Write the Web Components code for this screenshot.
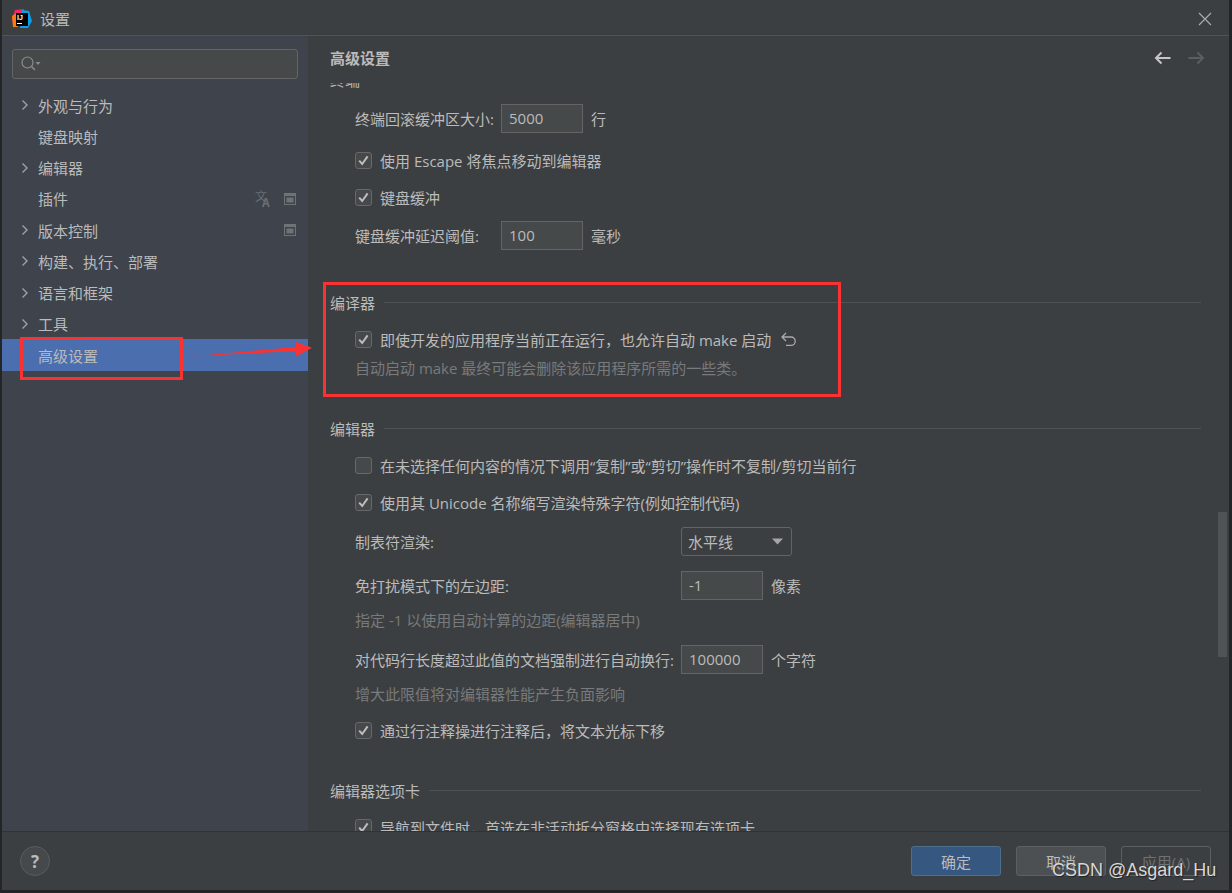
<!DOCTYPE html>
<html lang="zh">
<head>
<meta charset="utf-8">
<title>设置</title>
<style>
	html, body { margin: 0; height: 100%; }
	body {
		background: #232527;
		overflow: hidden;
		font-family: "Open Sans", "Noto Sans CJK SC", sans-serif;
		font-size: 15px;
		color: #bbbbbb;
	}
</style>
</head>
<body>
<settings-window></settings-window>
<script>
// Small controls first, then the panels that use them

class NavItem extends HTMLElement {
	constructor() {
		super();
		const shadow = this.attachShadow({mode: 'open'});
		shadow.innerHTML = `
			<style>
				:host { display: flex; align-items: center; height: 31.25px; padding-left: 17px; padding-right: 12px; }
				:host([selected]) { background: #4b6eaf; }
				.arrow { width: 19px; height: 16px; flex: none; }
				.label { flex: 1; }
				.extra { display: flex; align-items: center; }
			</style>
			<svg class="arrow" viewBox="0 0 19 16"></svg>
			<span class="label"><slot></slot></span>
			<span class="extra"><slot name="extra"></slot></span>`;
	}

	connectedCallback() {
		if (this.hasAttribute('expandable')) {
			this.shadowRoot.querySelector('.arrow').innerHTML =
				'<path d="M3.5 3.5 L8 8 L3.5 12.5" fill="none" stroke="#a0a3a5" stroke-width="1.4"/>';
		}
	}
}
customElements.define('nav-item', NavItem);

class SideNav extends HTMLElement {
	constructor() {
		super();
		const shadow = this.attachShadow({mode: 'open'});
		const win = '<svg slot="extra" width="12" height="12" viewBox="0 0 12 12"><rect x=".5" y=".5" width="11" height="11" fill="none" stroke="#6e7376"/><rect x="1" y="1" width="10" height="2" fill="#6e7376"/><rect x="2.5" y="4.5" width="7" height="5" fill="#6e7376"/></svg>';
		shadow.innerHTML = `
			<style>
				:host { display: block; width: 306px; flex: none; background: #3e434c; box-sizing: border-box; padding-top: 13px; }
				.search { display: flex; align-items: center; box-sizing: border-box; height: 30px; margin: 0 10px 0 10px; padding-left: 7px;
					background: #45494a; border: 1px solid #646464; border-radius: 3px; }
				.nav { margin-top: 10.4px; }
				.tr { font-family: "Noto Sans CJK SC", sans-serif; margin-right: 11px; }
			</style>
			<div class="search">
				<svg width="22" height="18" viewBox="0 0 22 18">
					<circle cx="7.5" cy="7.5" r="5.5" fill="none" stroke="#8a8d8f" stroke-width="1.2"/>
					<path d="M11.5 11.5 L15 15" stroke="#8a8d8f" stroke-width="1.4"/>
					<path d="M15.5 7 h5 l-2.5 3 z" fill="#8a8d8f"/>
				</svg>
			</div>
			<div class="nav">
				<nav-item expandable>外观与行为</nav-item>
				<nav-item>键盘映射</nav-item>
				<nav-item expandable>编辑器</nav-item>
				<nav-item>插件
					<svg slot="extra" class="tr" width="18" height="18" viewBox="0 0 18 18" style="font-family:'Noto Sans CJK SC',sans-serif;margin-right:11px">
						<text x="0" y="11" font-size="12" fill="#6a6f72">文</text>
						<text x="7" y="17" font-size="12" font-weight="700" fill="#6a6f72">A</text>
					</svg>${win}</nav-item>
				<nav-item expandable>版本控制${win}</nav-item>
				<nav-item expandable>构建、执行、部署</nav-item>
				<nav-item expandable>语言和框架</nav-item>
				<nav-item expandable>工具</nav-item>
				<nav-item selected>高级设置</nav-item>
			</div>`;
	}
}
customElements.define('side-nav', SideNav);

class SectionTitle extends HTMLElement {
	constructor() {
		super();
		const shadow = this.attachShadow({mode: 'open'});
		shadow.innerHTML = `
			<style>
				:host { display: flex; align-items: center; height: 20px; gap: 9px; }
				i { flex: 1; height: 1px; background: #505254; }
			</style>
			<slot></slot><i></i>`;
	}
}
customElements.define('section-title', SectionTitle);

class SettingCheck extends HTMLElement {
	constructor() {
		super();
		const shadow = this.attachShadow({mode: 'open'});
		shadow.innerHTML = `
			<style>
				:host { display: flex; align-items: center; height: 20px; margin-left: 25px; }
				.box { width: 17px; height: 17px; box-sizing: border-box; flex: none; margin-right: 8px; border-radius: 3px;
					background: #45494a; border: 1px solid #666869; }
				svg { display: none; }
				:host([checked]) svg { display: block; }
			</style>
			<span class="box"><svg width="15" height="15" viewBox="0 0 15 15"><path d="M3.2 7.6 L6.2 11 L11.6 3.4" fill="none" stroke="#bdbdbd" stroke-width="2"/></svg></span>
			<slot></slot>`;
	}
}
customElements.define('setting-check', SettingCheck);

class SettingHint extends HTMLElement {
	constructor() {
		super();
		const shadow = this.attachShadow({mode: 'open'});
		shadow.innerHTML = `
			<style>
				:host { display: flex; align-items: center; height: 20px; color: #787a7b; }
			</style>
			<slot></slot>`;
	}
}
customElements.define('setting-hint', SettingHint);

// label, then a field at a fixed column, then the unit
class SettingField extends HTMLElement {
	constructor() {
		super();
		const shadow = this.attachShadow({mode: 'open'});
		shadow.innerHTML = `
			<style>
				:host { display: flex; align-items: center; height: 29px; margin-left: 25px; }
				.label { flex: none; white-space: nowrap; }
				.field { box-sizing: border-box; flex: none; width: 82px; height: 29px; padding-left: 7px; line-height: 27px;
					background: #45494a; border: 1px solid #646464; }
				.unit { margin-left: 8px; }
			</style>
			<span class="label"><slot></slot></span>
			<span class="field"></span>
			<span class="unit"></span>`;
	}

	connectedCallback() {
		this.shadowRoot.querySelector('.label').style.width = this.getAttribute('column') + 'px';
		this.shadowRoot.querySelector('.field').textContent = this.getAttribute('value');
		this.shadowRoot.querySelector('.unit').textContent = this.getAttribute('unit');
	}
}
customElements.define('setting-field', SettingField);

class SettingSelect extends HTMLElement {
	constructor() {
		super();
		const shadow = this.attachShadow({mode: 'open'});
		shadow.innerHTML = `
			<style>
				:host { display: flex; align-items: center; height: 29px; margin-left: 25px; }
				.label { width: 326px; flex: none; }
				.combo { display: flex; align-items: center; justify-content: space-between; box-sizing: border-box; width: 111px; height: 29px;
					padding: 0 8px 0 6px; border: 1px solid #646464; border-radius: 3px; }
			</style>
			<span class="label"><slot></slot></span>
			<span class="combo"><span class="value"></span>
				<svg width="11" height="7" viewBox="0 0 11 7"><path d="M0 .5 h11 l-5.5 6 z" fill="#a4a6a8"/></svg>
			</span>`;
	}

	connectedCallback() {
		this.shadowRoot.querySelector('.value').textContent = this.getAttribute('value');
	}
}
customElements.define('setting-select', SettingSelect);

class SettingsPane extends HTMLElement {
	constructor() {
		super();
		const shadow = this.attachShadow({mode: 'open'});
		shadow.innerHTML = `
			<style>
				:host { display: flex; flex-direction: column; flex: 1; min-width: 0; background: #3c3f41; position: relative; }
				header { display: flex; align-items: center; justify-content: space-between; flex: none; height: 47px; box-sizing: border-box;
					padding: 0 24px 4px 22px; font-weight: 700; }
				header div { display: flex; gap: 17px; }
				.scroll { flex: 1; overflow: hidden; padding: 0 28px 0 22px; }
				.scroll > :first-child { margin-top: -14px; }
				.bar { position: absolute; right: 2px; top: 476px; width: 9px; height: 145px; background: #505355; }
				.undo { margin-left: 9px; }
			</style>
			<header>
				<span>高级设置</span>
				<div>
					<svg width="17" height="14" viewBox="0 0 17 14"><path d="M16.5 7 H2 M7.5 1.5 L2 7 L7.5 12.5" fill="none" stroke="#c4c6c8" stroke-width="2"/></svg>
					<svg width="17" height="14" viewBox="0 0 17 14"><path d="M.5 7 H15 M9.5 1.5 L15 7 L9.5 12.5" fill="none" stroke="#5b5e60" stroke-width="2"/></svg>
				</div>
			</header>
			<div class="scroll">
				<section-title>终端</section-title>
				<setting-field style="margin-top:15px" column="146" value="5000" unit="行">终端回滚缓冲区大小:</setting-field>
				<setting-check style="margin-top:17px" checked>使用 Escape 将焦点移动到编辑器</setting-check>
				<setting-check style="margin-top:17px" checked>键盘缓冲</setting-check>
				<setting-field style="margin-top:14px" column="146" value="100" unit="毫秒">键盘缓冲延迟阈值:</setting-field>

				<section-title style="margin-top:42px">编译器</section-title>
				<setting-check style="margin-top:17px" checked>即使开发的应用程序当前正在运行，也允许自动 make 启动
					<svg class="undo" width="17" height="16" viewBox="0 0 17 16"><path d="M2 6 H11 A4.2 4.2 0 0 1 11 14.4 H6 M6 2 L2 6 L6 10" fill="none" stroke="#a8aaac" stroke-width="1.3"/></svg>
				</setting-check>
				<setting-hint style="margin:8px 0 0 25px">自动启动 make 最终可能会删除该应用程序所需的一些类。</setting-hint>

				<section-title style="margin-top:41px">编辑器</section-title>
				<setting-check style="margin-top:17px">在未选择任何内容的情况下调用“复制”或“剪切”操作时不复制/剪切当前行</setting-check>
				<setting-check style="margin-top:17px" checked>使用其 Unicode 名称缩写渲染特殊字符(例如控制代码)</setting-check>
				<setting-select style="margin-top:15px" value="水平线">制表符渲染:</setting-select>
				<setting-field style="margin-top:15px" column="326" value="-1" unit="像素">免打扰模式下的左边距:</setting-field>
				<setting-hint style="margin:9px 0 0 25px">指定 -1 以使用自动计算的边距(编辑器居中)</setting-hint>
				<setting-field style="margin-top:16px" column="326" value="100000" unit="个字符">对代码行长度超过此值的文档强制进行自动换行:</setting-field>
				<setting-hint style="margin:9px 0 0 25px">增大此限值将对编辑器性能产生负面影响</setting-hint>
				<setting-check style="margin-top:17px" checked>通过行注释操进行注释后，将文本光标下移</setting-check>

				<section-title style="margin-top:40px">编辑器选项卡</section-title>
				<setting-check style="margin-top:17px" checked>导航到文件时，首选在非活动拆分窗格中选择现有选项卡</setting-check>
			</div>
			<div class="bar"></div>`;
	}
}
customElements.define('settings-pane', SettingsPane);

class DialogButton extends HTMLElement {
	constructor() {
		super();
		const shadow = this.attachShadow({mode: 'open'});
		shadow.innerHTML = `
			<style>
				:host { display: flex; align-items: center; justify-content: center; box-sizing: border-box; width: 90px; height: 30px;
					border-radius: 3px; border: 1px solid #5e6060; background: #4c5052; }
				:host([primary]) { background: #365880; border-color: #4c708c; }
				:host([disabled]) { background: transparent; color: #6f7173; }
			</style>
			<slot></slot>`;
	}
}
customElements.define('dialog-button', DialogButton);

class SettingsWindow extends HTMLElement {
	constructor() {
		super();
		const shadow = this.attachShadow({mode: 'open'});
		shadow.innerHTML = `
			<style>
				:host { display: flex; flex-direction: column; width: 1227px; height: 890px; margin-left: 2px; background: #3c3f41; position: relative; }
				.title { display: flex; align-items: center; flex: none; height: 35px; box-sizing: border-box; padding: 2px 0 0 10px; border-bottom: 0; }
				.title span { margin-left: 8px; flex: 1; }
				.close { margin-right: 17px; }
				.rule { height: 1px; background: #515355; flex: none; }
				.main { display: flex; flex: 1; min-height: 0; }
				footer { display: flex; align-items: center; flex: none; height: 59px; box-sizing: border-box; border-top: 1px solid #303234;
					padding: 0 18px 0 18px; gap: 15px; }
				.help { display: flex; align-items: center; justify-content: center; box-sizing: border-box; width: 30px; height: 30px; margin-right: auto;
					border-radius: 50%; background: #46494b; border: 1px solid #5a5d5f; font-weight: 700; font-size: 17px; }
				.mark { position: absolute; }
				.stamp { position: absolute; left: 1050px; top: 860px; color: #d8d8d8; font: 18px "Liberation Sans", sans-serif; white-space: nowrap;
					text-shadow: 1px 1px 1px #222; }
				.box { box-sizing: border-box; border: 3px solid #fb3232; }
				.ij { font: 700 7px "Liberation Sans", sans-serif; }
			</style>
			<div class="title">
				<svg width="20" height="20" viewBox="0 0 20 20">
					<path d="M3 1 L12 0 L10 10 L2 19 L0 10 z" fill="#f0256e"/>
					<path d="M0 7 L5 4 L6 18 L1 18 z" fill="#f97a12"/>
					<path d="M10 1 L17 2 L20 12 L16 19 L8 19 z" fill="#0a9fe8"/>
					<rect x="4" y="4" width="12" height="13" fill="#000"/>
					<text class="ij" x="5" y="10.5" fill="#fff">IJ</text>
					<rect x="5" y="14" width="5" height="1" fill="#fff"/>
				</svg>
				<span>设置</span>
				<svg class="close" width="14" height="14" viewBox="0 0 14 14"><path d="M1 1 L13 13 M13 1 L1 13" stroke="#a9abad" stroke-width="1.2"/></svg>
			</div>
			<div class="rule"></div>
			<div class="main">
				<side-nav></side-nav>
				<settings-pane></settings-pane>
			</div>
			<footer>
				<div class="help">?</div>
				<dialog-button primary>确定</dialog-button>
				<dialog-button>取消</dialog-button>
				<dialog-button disabled>应用(A)</dialog-button>
			</footer>
			<div class="mark box" style="left:18px;top:337px;width:163px;height:43px"></div>
			<div class="mark box" style="left:321px;top:282px;width:518px;height:115px"></div>
			<svg class="mark" style="left:187px;top:340px" width="128" height="20" viewBox="0 0 128 20">
				<path d="M2.5 16.5 L106.5 7 L106.5 1.7 L123 7.7 L106.5 16.7 L106.5 11 z" fill="#fb3232"/>
			</svg>
			<div class="stamp">CSDN @Asgard_Hu</div>`;
	}
}
customElements.define('settings-window', SettingsWindow);
</script>
</body>
</html>
